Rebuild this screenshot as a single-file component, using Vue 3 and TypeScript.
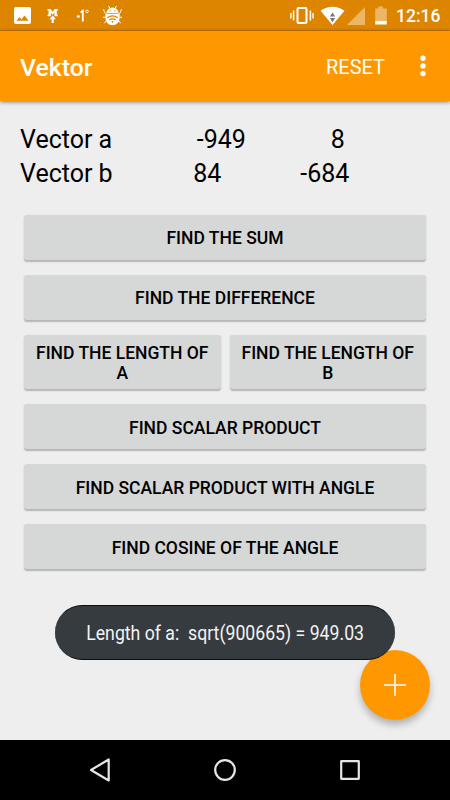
<script setup lang="ts">
interface Vector {
  name: string
  key: string
  x: number
  y: number
}

const vectors: Vector[] = [
  { name: 'Vector a', key: 'a', x: -949, y: 8 },
  { name: 'Vector b', key: 'b', x: 84, y: -684 },
]

const actionRows: string[][] = [
  ['Find the sum'],
  ['Find the difference'],
  ['Find the length of a', 'Find the length of b'],
  ['Find scalar product'],
  ['Find scalar product with angle'],
  ['Find cosine of the angle'],
]
</script>

<template>
  <div class="screen">
    <div class="status">
      <svg class="notifications" width="150" height="30" viewBox="0 0 150 30">
        <path fill="#fff" fill-rule="evenodd" d="M16 7h13a2 2 0 0 1 2 2v13a2 2 0 0 1-2 2H16a2 2 0 0 1-2-2V9a2 2 0 0 1 2-2zM16.5 20.8h12l-4-5.3-3 3.9-2-2.3z" />
        <path fill="#fff" d="M47.6 9h3.2l1.9 3 1.9-3h3.2v1.8h-1v3.6h1v1.8h-3.3v-3.6l-1.8 2.5-1.8-2.5v3.6h-3.3v-1.8h1v-3.6h-1z" />
        <path fill="#fff" d="M52.7 15.6l3.2 3.7h-2.1V23h-2.2v-3.7h-2.1z" />
        <path fill="none" stroke="#fff" stroke-width="1.8" d="M76.8 16.5h3M80.6 12.4l2.2-1.6V21.5" />
        <circle cx="87" cy="11.4" r="1.3" fill="none" stroke="#fff" stroke-width=".9" />
        <path fill="none" stroke="#fff" stroke-width="1" stroke-linecap="round" d="M108.7 6.3l1.8 2.9M116.3 6.3l-1.8 2.9M103.7 9.5l.8 3 2 1.5M121.3 9.5l-.8 3-2 1.5M103.3 17.3h3M121.7 17.3h-3M104.5 23l2-2.5M120.5 23l-2-2.5" />
        <path fill="#fff" d="M106.4 13.2a6.1 5.6 0 0 1 12.2 0zM105.4 13.9h14.2v4a7.1 7.4 0 0 1-14.2 0z" />
        <circle cx="110.2" cy="10.9" r=".6" fill="#de8500" />
        <circle cx="114.8" cy="10.9" r=".6" fill="#de8500" />
        <path fill="none" stroke="#de8500" stroke-width="1.2" d="M107.2 17.7q5.3-3.5 10.6 0M109.3 20q3.2-2.1 6.4 0" />
        <circle cx="112.5" cy="21.8" r=".9" fill="#de8500" />
      </svg>
      <svg class="system" width="110" height="30" viewBox="0 0 110 30">
        <rect x="17.5" y="8" width="9" height="15" rx="1" fill="none" stroke="#fff" stroke-width="2" />
        <path fill="none" stroke="#fff" stroke-width="1.5" d="M13.6 10.5v10M30.4 10.5v10M10.9 13v5.5M33.1 13v5.5" />
        <path fill="#fff" d="M40.5 10.7q12-7.8 24 0L52.5 25z" />
        <path fill="#777" d="M52.5 12.4l2.6 4.1h-5.2zM52.5 22.3l2.6-4.4h-5.2z" />
        <path fill="#ebb666" d="M85 7v18H67z" />
        <path fill="#ebb666" d="M98.2 6.5h4.7v2h3.9V21H95.2V8.5h3z" />
        <path fill="#fff" d="M95.2 21h11.6v3.5H95.2z" />
      </svg>
      <span class="clock">12:16</span>
    </div>

    <header class="appbar">
      <h1 class="title">Vektor</h1>
      <button class="reset">RESET</button>
      <svg class="more" width="6" height="22" viewBox="0 0 6 22">
        <circle cx="3" cy="3.3" r="2.7" />
        <circle cx="3" cy="11" r="2.7" />
        <circle cx="3" cy="18.6" r="2.7" />
      </svg>
    </header>

    <main class="content">
      <div v-for="v in vectors" :key="v.key" class="vector" :class="`vector-${v.key}`">
        <span class="name">{{ v.name }}</span>
        <span class="value">{{ v.x }}</span>
        <span class="value">{{ v.y }}</span>
      </div>
      <div class="actions">
        <div v-for="(row, i) in actionRows" :key="i" class="row">
          <button v-for="label in row" :key="label" class="action">{{ label }}</button>
        </div>
      </div>
    </main>

    <nav class="navbar">
      <svg width="24" height="26" viewBox="0 0 24 26"><path d="M20.7 2.5v21L3 13z" /></svg>
      <svg width="24" height="26" viewBox="0 0 24 26"><circle cx="12" cy="13" r="9.8" /></svg>
      <svg width="24" height="26" viewBox="0 0 24 26"><rect x="3.2" y="4.2" width="17.6" height="17.6" rx=".3" /></svg>
    </nav>

    <button class="fab" aria-label="Add">
      <svg width="24" height="24" viewBox="0 0 24 24"><path d="M12 1v22M1 12h22" /></svg>
    </button>
    <div class="toast"><span class="message">Length of a:&nbsp; sqrt(900665) = 949.03</span></div>
  </div>
</template>

<style>
body {
  margin: 0;
}
</style>

<style scoped>
.screen {
  position: relative;
  display: flex;
  flex-direction: column;
  width: 450px;
  height: 800px;
  overflow: hidden;
  background: #eee;
  font-family: Roboto, sans-serif;
  color: #000;
}
button {
  border: 0;
  padding: 0;
  font-family: inherit;
}
.status {
  display: flex;
  flex: none;
  height: 30px;
  background: #de8500;
  border-bottom: 1px solid #c87800;
}
.system {
  margin-left: 130px;
}
.clock {
  margin-left: 6px;
  color: #fff;
  font-size: 17.5px;
  font-weight: 500;
  line-height: 33px;
}
.appbar {
  display: flex;
  align-items: center;
  flex: none;
  box-sizing: border-box;
  height: 70px;
  padding: 0 24.5px 0 20px;
  background: #ff9800;
  box-shadow: 0 1px 4px rgba(0, 0, 0, 0.5);
  color: #fff;
}
.title {
  flex: 1;
  margin: 4px 0 0;
  font-size: 24.8px;
  font-weight: 500;
  line-height: 30px;
}
.reset {
  margin: 2px 34.5px 0 0;
  background: none;
  color: #fff;
  font-size: 20px;
  line-height: 24px;
}
.more {
  fill: #fff;
}
.content {
  flex: 1;
  padding: 22px 24px 0;
}
.vector {
  display: flex;
  height: 34px;
  margin-left: -4px;
  font-size: 25px;
  line-height: 34px;
}
.name {
  width: 143px;
}
.value {
  width: 116.5px;
  text-align: center;
}
.vector-b .name {
  width: 128.5px;
}
.vector-b .value {
  width: 117.5px;
}
.actions {
  display: flex;
  flex-direction: column;
  gap: 15px;
  margin-top: 24px;
}
.row {
  display: flex;
  gap: 9px;
}
.action {
  flex: 1;
  box-sizing: border-box;
  min-height: 45px;
  padding: 7.5px 8px 5.5px;
  border-radius: 3px;
  background: #d6d7d7;
  box-shadow: 0 1.5px 1.5px rgba(0, 0, 0, 0.24);
  color: #000;
  font-size: 17.5px;
  font-weight: 500;
  line-height: 20.7px;
  text-transform: uppercase;
}
.navbar {
  display: flex;
  align-items: center;
  justify-content: space-between;
  flex: none;
  box-sizing: border-box;
  height: 60px;
  padding: 0 88px;
  background: #000;
}
.navbar svg {
  fill: none;
  stroke: #e6e6e6;
  stroke-width: 2.2;
  stroke-linejoin: round;
}
.fab {
  position: absolute;
  left: 360px;
  top: 650px;
  display: flex;
  align-items: center;
  justify-content: center;
  width: 70px;
  height: 70px;
  border-radius: 50%;
  background: #ff9800;
  box-shadow: 0 5px 7px rgba(0, 0, 0, 0.25);
}
.fab path {
  stroke: #ffe8c8;
  stroke-width: 2;
}
.toast {
  position: absolute;
  left: 55px;
  top: 605px;
  display: flex;
  align-items: center;
  justify-content: center;
  box-sizing: border-box;
  width: 340px;
  height: 55px;
  border-top: 1px solid #0b0e10;
  border-bottom: 1px solid #0b0e10;
  border-radius: 28px;
  background: #363b3f;
}
.message {
  color: #f3f3f3;
  font-size: 20px;
  white-space: nowrap;
  transform: scaleX(0.884);
}
</style>
